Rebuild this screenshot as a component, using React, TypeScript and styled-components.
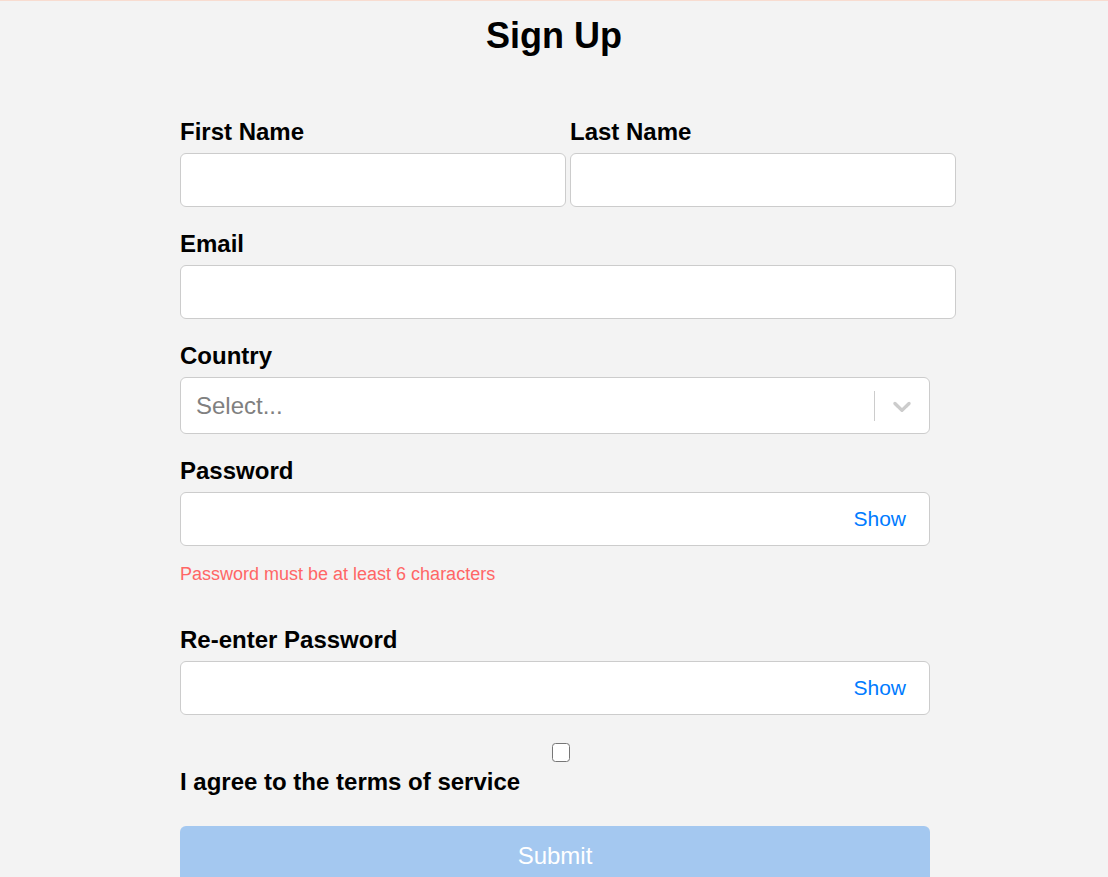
import React, { useState } from 'react';
import styled, { createGlobalStyle } from 'styled-components';

const GlobalStyle = createGlobalStyle`
	html, body {
		margin: 0;
		padding: 0;
		background: #f3f3f3;
	}
	body {
		font-family: "Liberation Sans", Arial, sans-serif;
		color: #000;
	}
	* {
		box-sizing: border-box;
	}
`;

const Page = styled.div`
	min-height: 877px;
	border-top: 1px solid #f8dcd0;
	background: #f3f3f3;
	overflow: hidden;
`;

const Title = styled.h1`
	margin: 14px 0 0;
	font-size: 36px;
	line-height: 41px;
	font-weight: 700;
	text-align: center;
`;

const Form = styled.form`
	width: 750px;
	margin-left: calc(50% - 374px);
	padding-top: 61.5px;
	display: flex;
	flex-direction: column;
	gap: 22.5px;
`;

const Group = styled.div`
	display: flex;
	flex-direction: column;
`;

const NameRow = styled.div`
	display: flex;
	gap: 4px;
	width: 776px;
`;

const NameCol = styled(Group)`
	flex: 1;
`;

const Label = styled.label`
	display: block;
	font-size: 24px;
	font-weight: 700;
	line-height: 27.6px;
	margin-bottom: 8px;
`;

const TextInput = styled.input<{ $wide?: boolean }>`
	width: ${(p) => (p.$wide ? '776px' : '100%')};
	height: 54px;
	padding: 0 12px;
	border: 1px solid #ccc;
	border-radius: 6px;
	background: #fff;
	font-family: inherit;
	font-size: 24px;
	outline: none;
`;

const SelectControl = styled.div`
	height: 57px;
	display: flex;
	align-items: center;
	border: 1px solid #ccc;
	border-radius: 6px;
	background: #fff;
`;

const Placeholder = styled.div`
	flex: 1;
	padding-left: 15px;
	font-size: 24px;
	color: #808080;
`;

const Separator = styled.span`
	width: 1.5px;
	height: 30px;
	background: #ccc;
`;

const Indicator = styled.div`
	display: flex;
	padding: 0 12px;
	color: #ccc;
`;

const PasswordWrap = styled.div`
	position: relative;
`;

const ShowButton = styled.button`
	position: absolute;
	right: 24px;
	top: 50%;
	transform: translateY(-50%);
	border: none;
	background: none;
	padding: 0;
	font-family: inherit;
	font-size: 21px;
	color: #007bff;
	cursor: pointer;
`;

const ErrorText = styled.p`
	margin: 18px 0;
	font-size: 18px;
	line-height: 20.7px;
	color: #ff6666;
`;

const CheckRow = styled.div`
	display: flex;
	justify-content: center;
	padding: 5.5px 0 6px 12px;
`;

const Checkbox = styled.input`
	appearance: none;
	margin: 0;
	width: 18.5px;
	height: 18.5px;
	border: 1.5px solid #767676;
	border-radius: 3.5px;
	background: #fff;
`;

const SubmitButton = styled.button`
	height: 57px;
	padding: 3px 0 0;
	border: none;
	border-radius: 6px;
	background: #a4c8f0;
	color: #fff;
	font-family: inherit;
	font-size: 24px;
`;

const Chevron = () => (
	<svg width="30" height="30" viewBox="0 0 20 20" fill="currentColor" aria-hidden="true">
		<path d="M4.516 7.548c0.436-0.446 1.043-0.481 1.576 0l3.908 3.747 3.908-3.747c0.533-0.481 1.141-0.446 1.574 0 0.436 0.445 0.408 1.197 0 1.615-0.406 0.418-4.695 4.502-4.695 4.502-0.217 0.223-0.502 0.335-0.787 0.335s-0.57-0.112-0.789-0.335c0 0-4.287-4.084-4.695-4.502s-0.436-1.170 0-1.615z" />
	</svg>
);

export default function App() {
	const [showPw, setShowPw] = useState(false);
	const [showPw2, setShowPw2] = useState(false);

	return (
		<Page>
			<GlobalStyle />
			<Title>Sign Up</Title>

			<Form onSubmit={(e) => e.preventDefault()}>
				<NameRow>
					<NameCol>
						<Label>First Name</Label>
						<TextInput type="text" />
					</NameCol>
					<NameCol>
						<Label>Last Name</Label>
						<TextInput type="text" />
					</NameCol>
				</NameRow>

				<Group>
					<Label>Email</Label>
					<TextInput type="email" $wide />
				</Group>

				<Group>
					<Label>Country</Label>
					<SelectControl>
						<Placeholder>Select...</Placeholder>
						<Separator />
						<Indicator>
							<Chevron />
						</Indicator>
					</SelectControl>
				</Group>

				<Group>
					<Label>Password</Label>
					<PasswordWrap>
						<TextInput type={showPw ? 'text' : 'password'} />
						<ShowButton type="button" onClick={() => setShowPw(!showPw)}>
							{showPw ? 'Hide' : 'Show'}
						</ShowButton>
					</PasswordWrap>
					<ErrorText>Password must be at least 6 characters</ErrorText>
				</Group>

				<Group>
					<Label>Re-enter Password</Label>
					<PasswordWrap>
						<TextInput type={showPw2 ? 'text' : 'password'} />
						<ShowButton type="button" onClick={() => setShowPw2(!showPw2)}>
							{showPw2 ? 'Hide' : 'Show'}
						</ShowButton>
					</PasswordWrap>
				</Group>

				<Group>
					<CheckRow>
						<Checkbox type="checkbox" id="terms" />
					</CheckRow>
					<Label htmlFor="terms">I agree to the terms of service</Label>
				</Group>

				<SubmitButton type="submit" disabled>
					Submit
				</SubmitButton>
			</Form>
		</Page>
	);
}
